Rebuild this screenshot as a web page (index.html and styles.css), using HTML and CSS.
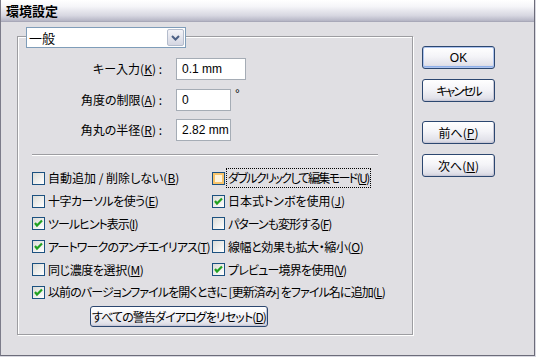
FILE: index.html
```html
<!DOCTYPE html>
<html lang="ja">
<head>
<meta charset="utf-8">
<link rel="stylesheet" href="styles.css">
</head>
<body>
<div class="window">
  <div class="titlebar">環境設定</div>
  <div class="content">
    <div class="group">
      <div class="combo">
        <span class="combo-text">一般</span>
        <span class="combo-btn"><svg width="9" height="6" viewBox="0 0 9 6"><polyline points="1,1 4.5,4.5 8,1" fill="none" stroke="#4d6185" stroke-width="2"/></svg></span>
      </div>
      <div class="form">
        <div class="lbl">キー入力(<u>K</u>) :</div>
        <div class="cell"><div class="field w70">0.1 mm</div></div>
        <div class="lbl">角度の制限(<u>A</u>) :</div>
        <div class="cell"><div class="field w55">0</div><span class="deg">°</span></div>
        <div class="lbl">角丸の半径(<u>R</u>) :</div>
        <div class="cell"><div class="field w55">2.82 mm</div></div>
      </div>
      <div class="sep"></div>
      <div class="checks">
        <div class="chk"><span class="box"></span><span class="txt">自動追加 / 削除しない(<u>B</u>)</span></div>
        <div class="chk"><span class="box hot"></span><span class="txt focus ls15">ダブルクリックして編集モード(<u>U</u>)</span></div>
        <div class="chk"><span class="box"></span><span class="txt ls05">十字カーソルを使う(<u>E</u>)</span></div>
        <div class="chk"><span class="box on"><svg width="11" height="11" viewBox="0 0 11 11"><path d="M2 5 L4 7.5 L9 2.5" fill="none" stroke="#21a121" stroke-width="2.2"/></svg></span><span class="txt">日本式トンボを使用(<u>J</u>)</span></div>
        <div class="chk"><span class="box on"><svg width="11" height="11" viewBox="0 0 11 11"><path d="M2 5 L4 7.5 L9 2.5" fill="none" stroke="#21a121" stroke-width="2.2"/></svg></span><span class="txt ls1">ツールヒント表示(<u>I</u>)</span></div>
        <div class="chk"><span class="box"></span><span class="txt ls1">パターンも変形する(<u>F</u>)</span></div>
        <div class="chk"><span class="box on"><svg width="11" height="11" viewBox="0 0 11 11"><path d="M2 5 L4 7.5 L9 2.5" fill="none" stroke="#21a121" stroke-width="2.2"/></svg></span><span class="txt ls09">アートワークのアンチエイリアス(<u>T</u>)</span></div>
        <div class="chk"><span class="box"></span><span class="txt ls04">線幅と効果も拡大・縮小(<u>O</u>)</span></div>
        <div class="chk"><span class="box"></span><span class="txt ls04">同じ濃度を選択(<u>M</u>)</span></div>
        <div class="chk"><span class="box on"><svg width="11" height="11" viewBox="0 0 11 11"><path d="M2 5 L4 7.5 L9 2.5" fill="none" stroke="#21a121" stroke-width="2.2"/></svg></span><span class="txt ls08">プレビュー境界を使用(<u>V</u>)</span></div>
        <div class="chk wide"><span class="box on"><svg width="11" height="11" viewBox="0 0 11 11"><path d="M2 5 L4 7.5 L9 2.5" fill="none" stroke="#21a121" stroke-width="2.2"/></svg></span><span class="txt ls09">以前のバージョンファイルを開くときに [更新済み] をファイル名に追加(<u>L</u>)</span></div>
      </div>
      <div class="btn reset"><span class="ls09">すべての警告ダイアログをリセット(<u>D</u>)</span></div>
    </div>
    <div class="side">
      <div class="btn default">OK</div>
      <div class="btn"><span class="ls2">キャンセル</span></div>
      <div class="btn gap">前へ(<u>P</u>)</div>
      <div class="btn">次へ(<u>N</u>)</div>
    </div>
  </div>
</div>
</body>
</html>
```
FILE: styles.css
```css
* { box-sizing: border-box; }
html, body { margin: 0; padding: 0; background: #d8d8e0; }
body {
  font-family: "Noto Sans CJK JP", sans-serif;
  font-size: 12px;
  color: #000;
  font-feature-settings: "palt";
}
u { text-decoration-thickness: 1px; text-underline-offset: 1px; }

.ls04 { letter-spacing: -0.4px; }
.ls05 { letter-spacing: -0.5px; }
.ls08 { letter-spacing: -0.8px; }
.ls09 { letter-spacing: -0.9px; }
.ls1 { letter-spacing: -1px; }
.ls15 { letter-spacing: -1.6px; }
.ls2 { letter-spacing: -2px; }

.window {
  width: 535px;
  height: 356px;
  background: #e0dfe3;
  border-left: 1px solid #7c7c8a;
  border-right: 1px solid #6c6c7a;
  border-bottom: 1px solid #6c6c7a;
  display: flex;
  flex-direction: column;
}

.titlebar {
  height: 22px;
  padding-left: 5px;
  font-weight: bold;
  font-size: 13px;
  line-height: 22px;
  background: linear-gradient(#ffffff 0%, #f6f6f9 30%, #d6d6e0 75%, #b4b4c4 100%);
  border-bottom: 1px solid #a8a8b8;
}

.content {
  display: flex;
  padding: 14px 0 0 16px;
}

.group {
  width: 396px;
  height: 299px;
  border: 1px solid #9d9da1;
  box-shadow: 1px 1px 0 #fff, inset 1px 1px 0 #fff;
}

.combo {
  width: 160px;
  height: 21px;
  margin: -10px 0 0 8px;
  background: #fff;
  border: 1px solid #7f9db9;
  display: flex;
  align-items: stretch;
}
.combo-text {
  flex: 1;
  padding-left: 2px;
  line-height: 19px;
  font-size: 13px;
}
.combo-btn {
  width: 17px;
  margin: 1px;
  border: 1px solid #b4bccc;
  border-radius: 2px;
  background: linear-gradient(#f4f4f8, #d4d6e2);
  display: flex;
  align-items: center;
  justify-content: center;
}

.form {
  margin-top: 10px;
  display: grid;
  grid-template-columns: 144px auto;
  grid-auto-rows: 22px;
  column-gap: 14px;
  row-gap: 8.5px;
}
.lbl {
  text-align: right;
  line-height: 22px;
  white-space: nowrap;
}
.cell { display: flex; }
.field {
  height: 22px;
  background: #fff;
  border: 1px solid #a5acb5;
  padding-left: 5px;
  font-family: "Liberation Sans", sans-serif;
  font-size: 12px;
  line-height: 20px;
  white-space: nowrap;
  overflow: hidden;
}
.w70 { width: 70px; }
.w55 { width: 55px; }
.deg {
  margin-left: 4px;
  font-family: "Liberation Sans", sans-serif;
  font-size: 12px;
  line-height: 10px;
}

.sep {
  margin: 13px 0 0 14px;
  width: 346px;
  height: 2px;
  border-top: 1px solid #9d9da1;
  border-bottom: 1px solid #fff;
}

.checks {
  margin: 11px 0 0 14px;
  display: grid;
  grid-template-columns: 180px 1fr;
  grid-auto-rows: 22.8px;
}
.chk {
  display: flex;
  align-items: center;
  white-space: nowrap;
}
.chk.wide { grid-column: 1 / 3; }
.box {
  width: 13px;
  height: 13px;
  flex: none;
  border: 1px solid #1c5180;
  background: linear-gradient(135deg, #dcdcd7, #ffffff);
  margin-right: 3px;
  display: flex;
}
.box.hot {
  background: #fdf3dc;
  box-shadow: inset 0 0 0 2px #f8c46a;
}
.txt { line-height: 16px; }
.txt.focus {
  outline: 1px dotted #000;
  outline-offset: 1px;
}

.btn {
  height: 23px;
  width: 73px;
  border: 1px solid #2c4770;
  border-radius: 3px;
  background: linear-gradient(#ffffff 0%, #f4f4f8 45%, #e2e2ea 85%, #cfcfdc 100%);
  box-shadow: inset -1px -1px 0 #c8c8d6;
  display: flex;
  align-items: center;
  justify-content: center;
  white-space: nowrap;
}
.btn.default {
  font-family: "Liberation Sans", "Noto Sans CJK JP", sans-serif;
  box-shadow: inset 0 0 0 1px #aec4ee, inset 0 -2px 0 #8fb0ea;
}
.side {
  margin-left: 9px;
  padding-top: 10px;
  display: flex;
  flex-direction: column;
  gap: 10px;
}
.btn.gap { margin-top: 9px; }
.btn.reset {
  width: 178px;
  height: 21px;
  margin: 2px 0 0 72px;
}
```
